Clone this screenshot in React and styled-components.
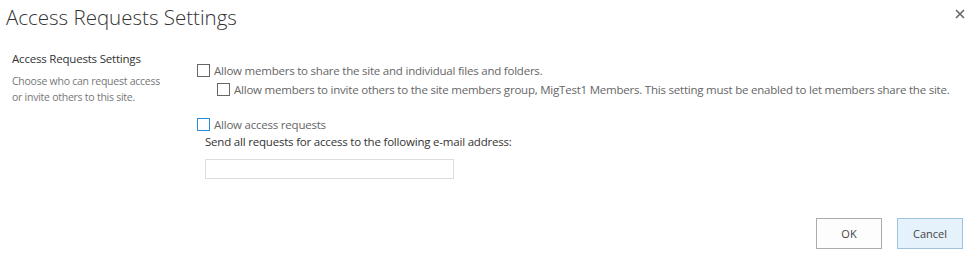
import React from "react";
import styled, { createGlobalStyle } from "styled-components";

const GlobalStyle = createGlobalStyle`
  html, body {
    margin: 0;
    padding: 0;
    background: #fff;
  }
  body {
    font-family: "Open Sans", "Noto Sans", sans-serif;
    color: #444;
  }
`;

const Dialog = styled.div`
  width: 975px;
  height: 258px;
  box-sizing: border-box;
  display: flex;
  flex-direction: column;
`;

const Header = styled.div`
  display: flex;
  justify-content: space-between;
  align-items: flex-start;
  padding: 3px 6px 0 6px;
`;

const Title = styled.h1`
  margin: 0;
  font-size: 20.5px;
  font-weight: 300;
  color: #333;
  line-height: 28px;
`;

const CloseButton = styled.button`
  appearance: none;
  background: transparent;
  border: 0;
  padding: 0;
  margin: 4px 2px 0 0;
  width: 14px;
  height: 14px;
  display: flex;
  align-items: center;
  justify-content: center;
  cursor: pointer;
`;

const Body = styled.div`
  display: flex;
  padding: 20px 0 0 12px;
`;

const Section = styled.div`
  width: 185px;
  flex-shrink: 0;
`;

const SectionTitle = styled.div`
  font-size: 11.5px;
  letter-spacing: -0.2px;
  color: #333;
  line-height: 16px;
`;

const SectionDesc = styled.div`
  margin-top: 6px;
  font-size: 10.5px;
  letter-spacing: -0.25px;
  color: #777;
  line-height: 16px;
`;

const Fields = styled.div`
  display: flex;
  flex-direction: column;
  padding-top: 10px;
`;

const CheckRow = styled.label`
  display: flex;
  align-items: center;
  gap: 4px;
  white-space: nowrap;
  margin-left: ${(p) => p.$indent || 0}px;
  margin-top: ${(p) => p.$top || 0}px;
  font-size: 11.5px;
  letter-spacing: -0.22px;
  color: #666;
  line-height: 19px;
`;

const Box = styled.span`
  width: 11px;
  height: 11px;
  border: 1px solid ${(p) => (p.$active ? "#2a8dd4" : "#666")};
  background: #fff;
  flex-shrink: 0;
`;

const FieldLabel = styled.div`
  margin: 0 0 0 8px;
  font-size: 11.5px;
  letter-spacing: -0.2px;
  color: #333;
  line-height: 16px;
  white-space: nowrap;
`;

const TextInput = styled.input`
  margin: 9px 0 0 8px;
  width: 249px;
  height: 20px;
  box-sizing: border-box;
  border: 1px solid #ddd;
  outline: none;
  font-family: inherit;
`;

const Footer = styled.div`
  display: flex;
  justify-content: flex-end;
  gap: 15px;
  margin-top: auto;
  padding: 0 12px 9px 0;
`;

const Button = styled.button`
  appearance: none;
  width: 66px;
  height: 31px;
  box-sizing: border-box;
  font-family: inherit;
  font-size: 11px;
  color: #444;
  background: ${(p) => (p.$primary ? "#e5f1fb" : "#fdfdfd")};
  border: 1px solid ${(p) => (p.$primary ? "#9cc3e0" : "#ababab")};
  padding: 0;
  cursor: pointer;
`;

function CloseIcon() {
  return (
    <svg width="10" height="10" viewBox="0 0 10 10">
      <path d="M1 1L9 9M9 1L1 9" stroke="#666" strokeWidth="1.6" />
    </svg>
  );
}

export default function App() {
  return (
    <>
      <GlobalStyle />
      <Dialog>
        <Header>
          <Title>Access Requests Settings</Title>
          <CloseButton aria-label="Close">
            <CloseIcon />
          </CloseButton>
        </Header>
        <Body>
          <Section>
            <SectionTitle>Access Requests Settings</SectionTitle>
            <SectionDesc>
              Choose who can request access
              <br />
              or invite others to this site.
            </SectionDesc>
          </Section>
          <Fields>
            <CheckRow>
              <Box />
              Allow members to share the site and individual files and folders.
            </CheckRow>
            <CheckRow $indent={20}>
              <Box />
              Allow members to invite others to the site members group, MigTest1
              Members. This setting must be enabled to let members share the
              site.
            </CheckRow>
            <CheckRow $top={16}>
              <Box $active />
              Allow access requests
            </CheckRow>
            <FieldLabel>
              Send all requests for access to the following e-mail address:
            </FieldLabel>
            <TextInput type="text" />
          </Fields>
        </Body>
        <Footer>
          <Button>OK</Button>
          <Button $primary>Cancel</Button>
        </Footer>
      </Dialog>
    </>
  );
}
